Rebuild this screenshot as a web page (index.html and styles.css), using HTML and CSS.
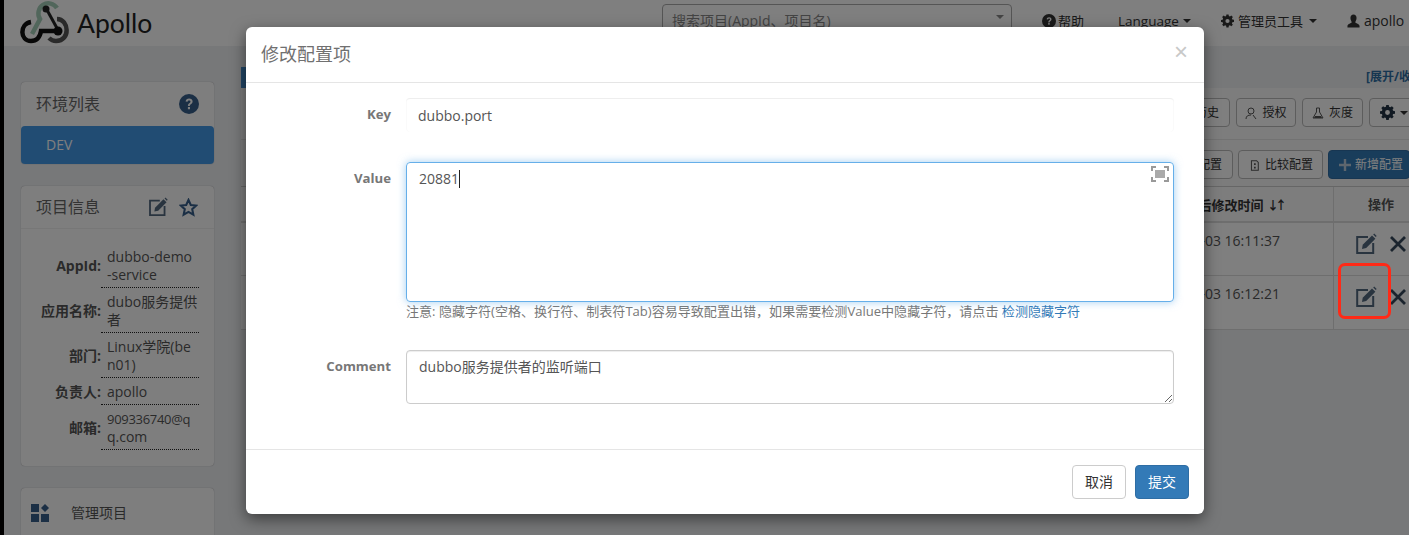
FILE: index.html
```html
<!DOCTYPE html>
<html lang="zh-CN">
<head>
<meta charset="utf-8">
<title>Apollo</title>
<link rel="stylesheet" href="styles.css">
</head>
<body>
<svg class="defs" width="0" height="0" aria-hidden="true">
  <symbol id="i-edit" viewBox="0 0 22 22">
    <path d="M13 4H2.200V20H18.200V10" fill="none" stroke="currentColor" stroke-width="2"/>
    <path d="M7 16l.7-4.200L17 2.600l3.400 3.200-9.200 9.200z" fill="currentColor"/>
    <path d="M18.200 1.600l1-1 2.500 2.500-1 1z" fill="currentColor"/>
  </symbol>
  <symbol id="i-x" viewBox="0 0 20 20">
    <path d="M3 3l14 14M17 3L3 17" fill="none" stroke="currentColor" stroke-width="2.800"/>
  </symbol>
  <symbol id="i-help" viewBox="0 0 20 20">
    <circle cx="10" cy="10" r="10" fill="currentColor"/>
    <path d="M6.600 7.600C6.800 5.600 8.200 4.600 10.100 4.600c2 0 3.500 1.200 3.500 3 0 2.600-2.700 2.400-2.700 4.400H8.900c0-3 2.600-3 2.600-4.300 0-.8-.6-1.300-1.400-1.300-.9 0-1.400.5-1.500 1.300zM8.900 13h2.100v2.200H8.900z" fill="#fff"/>
  </symbol>
  <symbol id="i-gear" viewBox="-1 0 18 18">
    <path d="M6.500 0h3l.4 2.200 1.500.6L13.300 1.500l2.100 2.100-1.300 1.900.6 1.500 2.300.4v3l-2.300.4-.6 1.500 1.300 1.900-2.100 2.100-1.900-1.300-1.500.6-.4 2.300h-3l-.4-2.300-1.500-.6-1.900 1.300L.6 14.300l1.300-1.900-.6-1.500L-1 10.500v-3l2.300-.4.6-1.500L.6 3.600l2.100-2.100 1.900 1.300 1.500-.6zM8 6.100a2.900 2.900 0 1 0 0 5.800 2.900 2.900 0 0 0 0-5.800z" fill="currentColor" fill-rule="evenodd"/>
  </symbol>
</svg>

<div class="page">
  <div class="strip"></div>
  <div class="app">
    <nav class="nav">
      <div class="brand">
        <svg class="logo" viewBox="0 0 50 44" aria-hidden="true">
          <path d="M12 34L20 19A10 10 0 1 1 37 8" fill="none" stroke="#a3cdb6" stroke-width="4.500"/>
          <path d="M27 10L38 30" fill="none" stroke="#222" stroke-width="3"/>
          <circle cx="26" cy="9" r="3.500" fill="#222"/>
          <path d="M11 22C-1 24 0 41 11 41C17 41 20 37 21 31H38" fill="none" stroke="#111" stroke-width="4.500"/>
          <path d="M37 19C49 19 51 41 36 41C33 41 31 40 29 38" fill="none" stroke="#555" stroke-width="4.500"/>
          <circle cx="38" cy="31" r="4.500" fill="#111"/>
        </svg>
        <span class="brand-name">Apollo</span>
      </div>
      <div class="search"><span>搜索项目(AppId、项目名)</span><i class="caret search-caret"></i></div>
      <a class="nav-item nav-help"><svg class="nav-ico"><use href="#i-help"/></svg>帮助</a>
      <a class="nav-item nav-lang">Language<i class="caret"></i></a>
      <a class="nav-item nav-admin"><svg class="nav-ico nav-ico-wide"><use href="#i-gear"/></svg>管理员工具<i class="caret caret-gap"></i></a>
      <a class="nav-item nav-user"><svg class="nav-ico nav-ico-wide" viewBox="0 0 14 14"><path d="M7 0c2 0 3.300 1.500 3.300 3.800C10.300 6 9 7.500 9 8.300c0 1.200 4.500 1.500 4.500 4.200V14H.5v-1.500C.5 9.800 5 9.500 5 8.300 5 7.500 3.700 6 3.700 3.800 3.700 1.500 5 0 7 0z" fill="currentColor"/></svg><span class="nav-user-name">apollo</span><i class="caret caret-gap"></i></a>
    </nav>

    <main class="main">
      <aside class="side">
        <section class="panel">
          <header class="panel-head panel-head-env">
            <span class="panel-title">环境列表</span>
            <svg class="head-help"><use href="#i-help"/></svg>
          </header>
          <div class="env-active">DEV</div>
        </section>

        <section class="panel">
          <header class="panel-head panel-head-info">
            <span class="panel-title">项目信息</span>
            <svg class="head-edit"><use href="#i-edit"/></svg>
            <svg class="head-star" viewBox="0 0 20 20"><path d="M10 2l2.400 5.300 5.800.6-4.300 3.900 1.200 5.700L10 14.600l-5.100 2.900 1.200-5.700L1.800 7.900l5.800-.6z" fill="none" stroke="currentColor" stroke-width="2.200"/></svg>
          </header>
          <dl class="info">
            <dt>AppId:</dt><dd>dubbo-demo<br>-service</dd>
            <dt>应用名称:</dt><dd>dubo服务提供者</dd>
            <dt>部门:</dt><dd>Linux学院(ben01)</dd>
            <dt>负责人:</dt><dd>apollo</dd>
            <dt>邮箱:</dt><dd><span class="tight">909336740@q</span><br>q.com</dd>
          </dl>
        </section>

        <section class="panel panel-manage">
          <svg class="manage-ico" viewBox="0 0 18 18"><path d="M0 0h8v8H0zM0 10h8v8H0zM10 10h8v8h-8zM14 0l4 4-4 4-4-4z" fill="currentColor"/></svg>
          <span>管理项目</span>
        </section>
      </aside>

      <div class="content">
        <div class="content-head">
          <span class="tag"></span>
          <a class="toggle">[展开/收缩]</a>
        </div>
        <div class="tool-row tool-row-a">
          <a class="btn btn-hist">历史</a>
          <a class="btn btn-auth"><svg class="btn-ico" viewBox="0 0 12 12"><circle cx="6" cy="4" r="3" fill="none" stroke="currentColor"/><path d="M1 12c0-3 2-4 5-4M8 8l3 4" fill="none" stroke="currentColor"/></svg>授权</a>
          <a class="btn btn-gray"><svg class="btn-ico btn-ico-flask" viewBox="0 0 12 12"><path d="M4.500 1h3v4L11 11H1l3.500-6z" fill="none" stroke="currentColor"/><path d="M3 9h6l1 2H2z" fill="currentColor"/></svg>灰度</a>
          <a class="btn btn-more"><svg class="btn-ico-gear"><use href="#i-gear"/></svg><i class="caret"></i></a>
        </div>
        <div class="tool-row tool-row-b">
          <a class="btn btn-sync">同步配置</a>
          <a class="btn btn-diff"><svg class="btn-ico" viewBox="0 0 12 14"><path d="M3 2h6l2 2v9H3z" fill="none" stroke="currentColor" stroke-width="1.200"/><path d="M6 5h2v2H6zM6 9h2v2H6z" fill="currentColor"/></svg>比较配置</a>
          <a class="btn btn-add"><svg class="plus" viewBox="0 0 12 12"><path d="M6 0v12M0 6h12" fill="none" stroke="currentColor" stroke-width="2.400"/></svg>新增配置</a>
        </div>
        <div class="tbl-head">
          <div class="cell-time">最后修改时间 <span class="sort">↓↑</span></div>
          <div class="cell-op cell-op-head">操作</div>
        </div>
        <div class="tbl-row">
          <div class="cell-time">2019-01-03 16:11:37</div>
          <div class="cell-op"><svg class="op-edit"><use href="#i-edit"/></svg><svg class="op-x"><use href="#i-x"/></svg></div>
        </div>
        <div class="tbl-row">
          <div class="cell-time">2019-01-03 16:12:21</div>
          <div class="cell-op"><svg class="op-edit"><use href="#i-edit"/></svg><svg class="op-x"><use href="#i-x"/></svg></div>
        </div>
      </div>
    </main>
  </div>

  <div class="backdrop"></div>

  <div class="modal">
    <header class="modal-head">
      <h4>修改配置项</h4>
      <span class="close">×</span>
    </header>
    <form class="modal-body">
      <div class="form-row">
        <label>Key</label>
        <div class="key-input">dubbo.port</div>
      </div>
      <div class="form-row">
        <label>Value</label>
        <div>
          <div class="value-input">
            <span>20881</span><i class="text-cursor"></i>
            <svg class="fullscreen" viewBox="0 0 18 16"><path d="M1 5V1h4M13 1h4v4M17 11v4h-4M5 15H1v-4" fill="none" stroke="#999" stroke-width="2"/><path d="M3.500 3.500h11v9h-11z" fill="#aaa" stroke="#fff"/></svg>
          </div>
          <p class="hint">注意: 隐藏字符(空格、换行符、制表符Tab)容易导致配置出错，如果需要检测Value中隐藏字符，请点击 <a>检测隐藏字符</a></p>
        </div>
      </div>
      <div class="form-row">
        <label>Comment</label>
        <div class="comment-input">dubbo服务提供者的监听端口</div>
      </div>
    </form>
    <footer class="modal-foot">
      <a class="foot-btn foot-cancel">取消</a>
      <a class="foot-btn foot-submit">提交</a>
    </footer>
  </div>

  <div class="mark"></div>
</div>
</body>
</html>
```

FILE: styles.css
```css
* { box-sizing: border-box; }
html, body { margin: 0; height: 100%; overflow: hidden; }
body {
  font: 14px/18px "Open Sans", "Noto Sans CJK SC", sans-serif;
  color: #333;
  background: #eef0f3;
}
.defs { position: absolute; }
.page { position: relative; display: flex; width: 1409px; height: 535px; overflow: hidden; }
.strip { flex: 0 0 4px; background: #000; position: relative; z-index: 5; }
.app { flex: 1; min-width: 0; }

/* nav */
.nav { display: flex; height: 46px; background: #fff; white-space: nowrap; font-size: 13px; }
.brand { display: flex; flex: 0 0 658px; padding-left: 16px; }
.logo { width: 50px; height: 44px; flex: none; }
.brand-name { font: 400 26.500px/46px Lato, sans-serif; color: #222; margin-left: 7px; }
.search {
  flex: 0 0 350px; height: 35px; margin-top: 4px; padding: 7px 9px;
  border: 1px solid #aaa; border-radius: 4px; color: #888; font-size: 14px; position: relative;
}
.search-caret { position: absolute; right: 7px; top: 10px; border-top-color: #666; border-width: 6px 4px 0; }
.nav-item { display: flex; align-items: center; height: 42px; color: #333; }
.nav-ico { width: 14px; height: 14px; margin-right: 2px; flex: none; }
.nav-ico-wide { width: 13px; margin-right: 4px; }
.nav-help { margin-left: 30px; }
.nav-lang { margin-left: 34px; font-size: 13.500px; }
.nav-lang .caret { margin-left: 4px; }
.nav-admin { margin-left: 30px; }
.nav-user { margin-left: 30px; }
.nav-user-name { font-size: 14px; }
.caret {
  display: inline-block; width: 0; height: 0; margin-left: 2px;
  border-top: 4px solid currentColor; border-left: 4px solid transparent; border-right: 4px solid transparent;
}
.caret-gap { margin-left: 6px; }

/* layout */
.main { display: flex; align-items: flex-start; padding-top: 21px; }
.side { flex: 0 0 193px; margin-left: 17px; margin-top: 15px; display: flex; flex-direction: column; gap: 22px; }
.content { flex: 0 0 1200px; margin-left: 27px; }

/* panels */
.panel { background: #fdfdfd; border-radius: 4px; box-shadow: 0 0 1px rgba(0,0,0,.4); }
.panel-head { display: flex; align-items: center; padding: 0 15px; }
.panel-head-env { height: 44px; }
.panel-head-info { height: 43px; border-bottom: 1px solid #eee; padding-right: 16px; }
.panel-title { font-size: 16px; color: #666; flex: 1; }
.head-help { width: 20px; height: 20px; color: #365e8a; }
.head-edit { width: 20px; height: 20px; color: #52687f; margin-right: 11px; }
.head-star { width: 19px; height: 19px; color: #365e8a; }
.env-active { height: 38px; line-height: 38px; padding-left: 25px; color: #fff; background: #4298e6; border-radius: 4px; }
.info { display: grid; grid-template-columns: 80px 98px; margin: 0; padding: 14px 0 16px; }
.info dt { display: flex; align-items: center; justify-content: flex-end; font-weight: 700; color: #555; }
.info dd { margin: 0; padding: 5px 0 3px 6px; word-break: break-all; color: #555; border-bottom: 1px dotted #222; }
.tight { letter-spacing: -.3px; font-size: 13px; white-space: nowrap; }
.panel-manage { display: flex; align-items: center; height: 50px; padding-left: 10px; color: #555; }
.manage-ico { width: 18px; height: 18px; color: #365e8a; margin-right: 22px; }

/* right area */
.content-head { display: flex; justify-content: space-between; height: 21px; padding-right: 14px; align-items: center; }
.tag { width: 900px; height: 21px; background: #428bca; }
.toggle { color: #2d6ca2; font-size: 12px; font-weight: 700; white-space: nowrap; padding-bottom: 2px; }
.tool-row { display: flex; justify-content: flex-end; background: #fbfbfb; border-bottom: 1px solid #e4e4e4; }
.tool-row-a { height: 52px; padding: 10px 20px 0 0; gap: 6px; }
.tool-row-b { height: 47px; padding: 10px 31px 0 0; gap: 5px; background: #f8f8f8; border-bottom: 1px solid #ccc; }
.btn {
  display: flex; align-items: center; justify-content: center; height: 29px; border: 1px solid #bbb;
  border-radius: 4px; font-size: 12px; color: #333; background: #fff; white-space: nowrap;
}
.btn-ico { width: 12px; height: 12px; margin-right: 5px; color: #555; flex: none; }
.btn-ico-gear { width: 15px; height: 15px; color: #234; margin-right: 3px; }
.btn-hist { width: 70px; justify-content: flex-end; padding-right: 10px; }
.btn-auth { width: 60px; }
.btn-gray { width: 61px; }
.btn-more { width: 52px; justify-content: flex-start; padding-left: 10px; }
.btn-sync { width: 70px; }
.btn-diff { width: 85px; }
.btn-add { width: 82px; color: #fff; background: #337ab7; border-color: #2e6da4; justify-content: flex-start; padding-left: 10px; }
.plus { width: 12px; height: 12px; margin-right: 4px; flex: none; color: #bcd; }
.tbl-head, .tbl-row { display: grid; grid-template-columns: 1fr 107px; background: #fff; }
.tbl-head { height: 36px; border-bottom: 2px solid #ddd; align-items: stretch; font-size: 13px; font-weight: 700; color: #333; background: #fbfbfb; }
.tbl-row { height: 53px; border-bottom: 1px solid #ddd; color: #555; font-size: 14px; }
.tbl-row + .tbl-row { height: 54px; }
.cell-time { text-align: right; padding: 9px 53px 0 0; border-right: 1px solid #ddd; }
.tbl-head .cell-time { padding-right: 46px; }
.sort { font-size: 12px; letter-spacing: -4px; padding-right: 4px; }
.cell-op { display: flex; align-items: flex-start; padding: 10px 0 0 21px; }
.cell-op-head { align-items: center; padding: 0 0 0 34px; font-size: 13px; color: #555; }
.op-edit { width: 22px; height: 22px; color: #52687f; }
.op-x { width: 20px; height: 20px; color: #36495c; margin-left: 11px; margin-top: 1px; }

/* overlay */
.backdrop { position: absolute; inset: 0 0 0 4px; background: rgba(0,0,0,.5); }
.modal {
  position: absolute; left: 246px; top: 27px; width: 958px; height: 487px; background: #fff;
  border-radius: 6px; box-shadow: 0 5px 15px rgba(0,0,0,.5); display: flex; flex-direction: column;
  font-size: 14px; color: #555;
}
.modal-head { display: flex; justify-content: space-between; height: 56px; padding: 15px 15px 0; border-bottom: 1px solid #e5e5e5; }
.modal-head h4 { margin: 0; font-size: 18px; line-height: 25px; font-weight: 400; color: #707070; }
.close { font: 400 24px/20px "Liberation Sans", sans-serif; color: #c8c8c8; margin-right: 1px; }
.modal-body { flex: 1; padding-top: 15px; display: flex; flex-direction: column; gap: 30px; }
.form-row { display: grid; grid-template-columns: 145px 768px; column-gap: 15px; }
.form-row label { font-size: 13.200px; font-weight: 700; color: #777; text-align: right; line-height: 20px; padding-top: 6px; }
.key-input {
  height: 34px; padding: 8px 12px 0; color: #555; border-top: 1px solid #eee; border-radius: 4px;
  box-shadow: inset 1px 0 0 #fafafa, inset -1px 0 0 #fafafa;
}
.value-input {
  position: relative; height: 140px; padding: 7px 12px; border: 1px solid #66afe9; border-radius: 4px;
  box-shadow: 0 0 8px rgba(102,175,233,.6); color: #555;
}
.text-cursor { display: inline-block; width: 1px; height: 18px; background: #222; vertical-align: top; }
.fullscreen { position: absolute; right: 4px; top: 3px; width: 18px; height: 16px; }
.hint { margin: 0; height: 18px; color: #777; font-size: 13.050px; white-space: nowrap; }
.hint a { color: #337ab7; }
.comment-input {
  height: 54px; padding: 7px 12px; border: 1px solid #ccc; border-radius: 4px; color: #555;
  box-shadow: inset 0 1px 1px rgba(0,0,0,.075); resize: both; overflow: auto;
}
.modal-foot { display: flex; justify-content: flex-end; gap: 9px; height: 65px; padding: 15px 15px 0; border-top: 1px solid #e5e5e5; }
.foot-btn { width: 54px; height: 34px; line-height: 32px; text-align: center; border: 1px solid #ccc; border-radius: 4px; color: #333; }
.foot-submit { color: #fff; background: #337ab7; border-color: #2e6da4; }
.mark { position: absolute; left: 1338px; top: 263px; width: 53px; height: 56px; border: 3px solid #ff2a17; border-radius: 7px; }
```
